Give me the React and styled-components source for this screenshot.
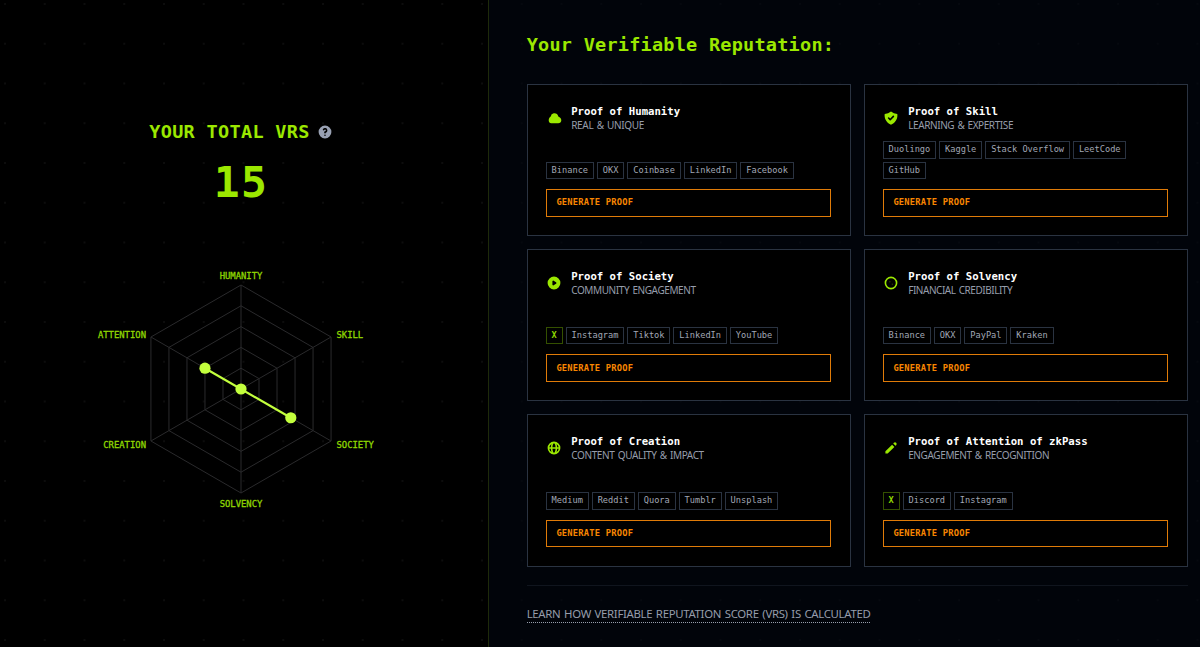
import { HiShieldCheck, HiPlay, HiGlobeAlt, HiPencil, HiQuestionMarkCircle } from 'react-icons/hi';
import styled, { createGlobalStyle } from 'styled-components';

const mono = `'DejaVu Sans Mono', 'Liberation Mono', monospace`;
const sans = `'Noto Sans', 'Open Sans', sans-serif`;

//styles
const GlobalStyle = createGlobalStyle`
  * {
    box-sizing: border-box;
  }

  body {
    margin: 0;
    background: #000;
    overflow: hidden;
  }
`;

const Page = styled.main`
  display: grid;
  grid-template-columns: 489px 1fr;
  width: 1200px;
  height: 647px;
  font-family: ${mono};
  background:
    radial-gradient(circle at 5px 4px, #0d0d0d 0.7px, transparent 1.1px) 0 0 / 39.75px 39.75px,
    #000;
`;

const ScorePanel = styled.section`
  display: flex;
  flex-direction: column;
  align-items: center;
  padding: 120px 6px 0 0;
  border-right: 1px solid #1e2a0a;
`;

const ScoreTitle = styled.h2`
  display: flex;
  align-items: center;
  gap: 7px;
  margin: 0;
  height: 23px;
  font-size: 18.5px;
  letter-spacing: 0.33px;
  color: #9be800;
`;

const Score = styled.div`
  margin-top: 15px;
  height: 50px;
  line-height: 48px;
  font-size: 43px;
  font-weight: 700;
  letter-spacing: 1.3px;
  color: #9be800;
`;

const Chart = styled.svg`
  margin-top: 54px;
  width: 300px;
  height: 256px;
  overflow: visible;

  text {
    font-family: ${mono};
    font-size: 8.9px;
    fill: #8fd600;
    stroke: #8fd600;
    stroke-width: 0.3px;
  }
`;

const Reputation = styled.section`
  padding: 32px 12px 0 37.7px;
  background: rgba(2, 7, 16, 0.6);
`;

const Heading = styled.h1`
  margin: 0;
  height: 26px;
  line-height: 26px;
  font-size: 18.5px;
  letter-spacing: 0.25px;
  color: #9be800;
`;

const Cards = styled.div`
  display: grid;
  grid-template-columns: 324px 324px;
  grid-auto-rows: 152.2px;
  gap: 13px;
  margin-top: 26px;
`;

const StyledCard = styled.article`
  display: flex;
  flex-direction: column;
  padding: 20px 18.6px 18.7px 18px;
  border: 1px solid #2a3341;
  background: #000;
`;

const CardHeader = styled.header`
  display: flex;
  align-items: center;
  gap: 9.5px;
  height: 27px;
  color: #9be800;

  > svg {
    flex: none;
    width: 16px;
    height: 16px;
    margin-bottom: 2px;
  }
`;

const CardTitle = styled.h3`
  margin: 0;
  height: 13.5px;
  line-height: 14px;
  font-size: 10.65px;
  color: #fff;
`;

const Subtitle = styled.p`
  margin: 0;
  height: 13.5px;
  line-height: 13.5px;
  font-family: ${sans};
  font-size: 10px;
  letter-spacing: ${props => props.$spacing}px;
  word-spacing: 1px;
  white-space: nowrap;
  color: #969dab;
`;

const Tags = styled.div`
  display: flex;
  flex-wrap: wrap;
  gap: 3px;
  margin-top: auto;
`;

const Tag = styled.span`
  height: 17.5px;
  padding: 0 4.9px;
  line-height: 15px;
  font-size: 8.67px;
  font-weight: ${props => (props.$active ? 700 : 400)};
  color: ${props => (props.$active ? '#8fd600' : '#a0a7b5')};
  border: 1px solid ${props => (props.$active ? '#345000' : '#2a3341')};
`;

const Button = styled.button`
  margin-top: 10px;
  height: 27.3px;
  padding: 0 9.7px 1px;
  text-align: left;
  font-family: ${mono};
  font-size: 8.75px;
  font-weight: 700;
  letter-spacing: 0.22px;
  color: #f88600;
  background: transparent;
  border: 1px solid #e07b08;
`;

const Footer = styled.footer`
  margin-top: 18px;
  padding-top: 20px;
  border-top: 1px solid #10151e;
  line-height: 0;
`;

const Link = styled.a`
  display: inline-block;
  height: 17px;
  line-height: 16px;
  font-family: ${sans};
  font-size: 11.4px;
  letter-spacing: -0.32px;
  word-spacing: 1px;
  color: #969dab;
  border-bottom: 1px dotted #969dab;
  white-space: nowrap;
`;

//icons
const CloudIcon = () => (
  <svg viewBox="0 0 16 16" fill="currentColor">
    <path d="M5.2 13.3C3.8 13.3 2.7 12 2.7 10.2 2.7 8.6 3.3 7.4 4.7 6.4A3.8 3.8 0 0 1 7.7 3.3C10 3 12 4.2 12.3 6.6 14.1 7.3 15.3 8.6 15.3 10.3 15.3 12 14 13.3 12.2 13.3Z" />
  </svg>
);

const CoinIcon = () => (
  <svg viewBox="0 0 16 16" fill="none" stroke="currentColor">
    <circle cx="8" cy="8" r="5.6" strokeWidth="1.6" />
    <path d="M6.4 6.8h1M8.8 9.2h1" opacity="0.4" />
  </svg>
);

//data
const proofs = [
  { title: 'Humanity', text: 'REAL & UNIQUE', spacing: -0.31, icon: CloudIcon, tags: ['Binance', 'OKX', 'Coinbase', 'LinkedIn', 'Facebook'] },
  { title: 'Skill', text: 'LEARNING & EXPERTISE', spacing: -0.41, icon: HiShieldCheck, tags: ['Duolingo', 'Kaggle', 'Stack Overflow', 'LeetCode', 'GitHub'] },
  { title: 'Society', text: 'COMMUNITY ENGAGEMENT', spacing: -0.4, icon: HiPlay, tags: ['X', 'Instagram', 'Tiktok', 'LinkedIn', 'YouTube'] },
  { title: 'Solvency', text: 'FINANCIAL CREDIBILITY', spacing: -0.46, icon: CoinIcon, tags: ['Binance', 'OKX', 'PayPal', 'Kraken'] },
  { title: 'Creation', text: 'CONTENT QUALITY & IMPACT', spacing: -0.36, icon: HiGlobeAlt, tags: ['Medium', 'Reddit', 'Quora', 'Tumblr', 'Unsplash'] },
  { title: 'Attention of zkPass', text: 'ENGAGEMENT & RECOGNITION', spacing: -0.38, icon: HiPencil, tags: ['X', 'Discord', 'Instagram'] }
];

const radius = 104;
const center = { x: 150, y: 127 };

const point = (index, r) => {
  const angle = (Math.PI / 3) * index - Math.PI / 2;
  return [center.x + r * Math.cos(angle), center.y + r * Math.sin(angle)];
};

const hexagon = r => [0, 1, 2, 3, 4, 5].map(i => point(i, r).join(',')).join(' ');

//components
const Radar = () => {
  const attention = point(5, radius * 0.4);
  const society = point(2, radius * 0.553);

  return (
    <Chart viewBox="0 0 300 256">
      <g fill="none" stroke="#2a2a2c">
        {[0.2, 0.4, 0.6, 0.8, 1].map(step => (
          <polygon key={step} points={hexagon(radius * step)} />
        ))}
        {[0, 1, 2].map(i => (
          <path key={i} d={`M${point(i, radius)} L${point(i + 3, radius)}`} />
        ))}
      </g>
      <path d={`M${attention} L${society}`} stroke="#c3ff3d" strokeWidth="2.2" />
      {[attention, [center.x, center.y], society].map(([x, y]) => (
        <circle key={x} cx={x} cy={y} r="5.6" fill="#c3ff3d" />
      ))}
      <text x="150" y="17" textAnchor="middle">HUMANITY</text>
      <text x="245.5" y="75.5">SKILL</text>
      <text x="245.5" y="185.5">SOCIETY</text>
      <text x="150" y="244.5" textAnchor="middle">SOLVENCY</text>
      <text x="55" y="185.5" textAnchor="end">CREATION</text>
      <text x="55" y="75.5" textAnchor="end">ATTENTION</text>
    </Chart>
  );
};

const Card = ({ title, text, spacing, icon: Icon, tags }) => (
  <StyledCard>
    <CardHeader>
      <Icon />
      <div>
        <CardTitle>Proof of {title}</CardTitle>
        <Subtitle $spacing={spacing}>{text}</Subtitle>
      </div>
    </CardHeader>
    <Tags>
      {tags.map(tag => (
        <Tag key={tag} $active={tag === 'X'}>{tag}</Tag>
      ))}
    </Tags>
    <Button>GENERATE PROOF</Button>
  </StyledCard>
);

const App = () => (
  <Page>
    <GlobalStyle />
    <ScorePanel>
      <ScoreTitle>
        YOUR TOTAL VRS
        <HiQuestionMarkCircle size={16} color="#99a1b3" />
      </ScoreTitle>
      <Score>15</Score>
      <Radar />
    </ScorePanel>
    <Reputation>
      <Heading>Your Verifiable Reputation:</Heading>
      <Cards>
        {proofs.map(proof => (
          <Card key={proof.title} {...proof} />
        ))}
      </Cards>
      <Footer>
        <Link>LEARN HOW VERIFIABLE REPUTATION SCORE (VRS) IS CALCULATED</Link>
      </Footer>
    </Reputation>
  </Page>
);

export default App;
